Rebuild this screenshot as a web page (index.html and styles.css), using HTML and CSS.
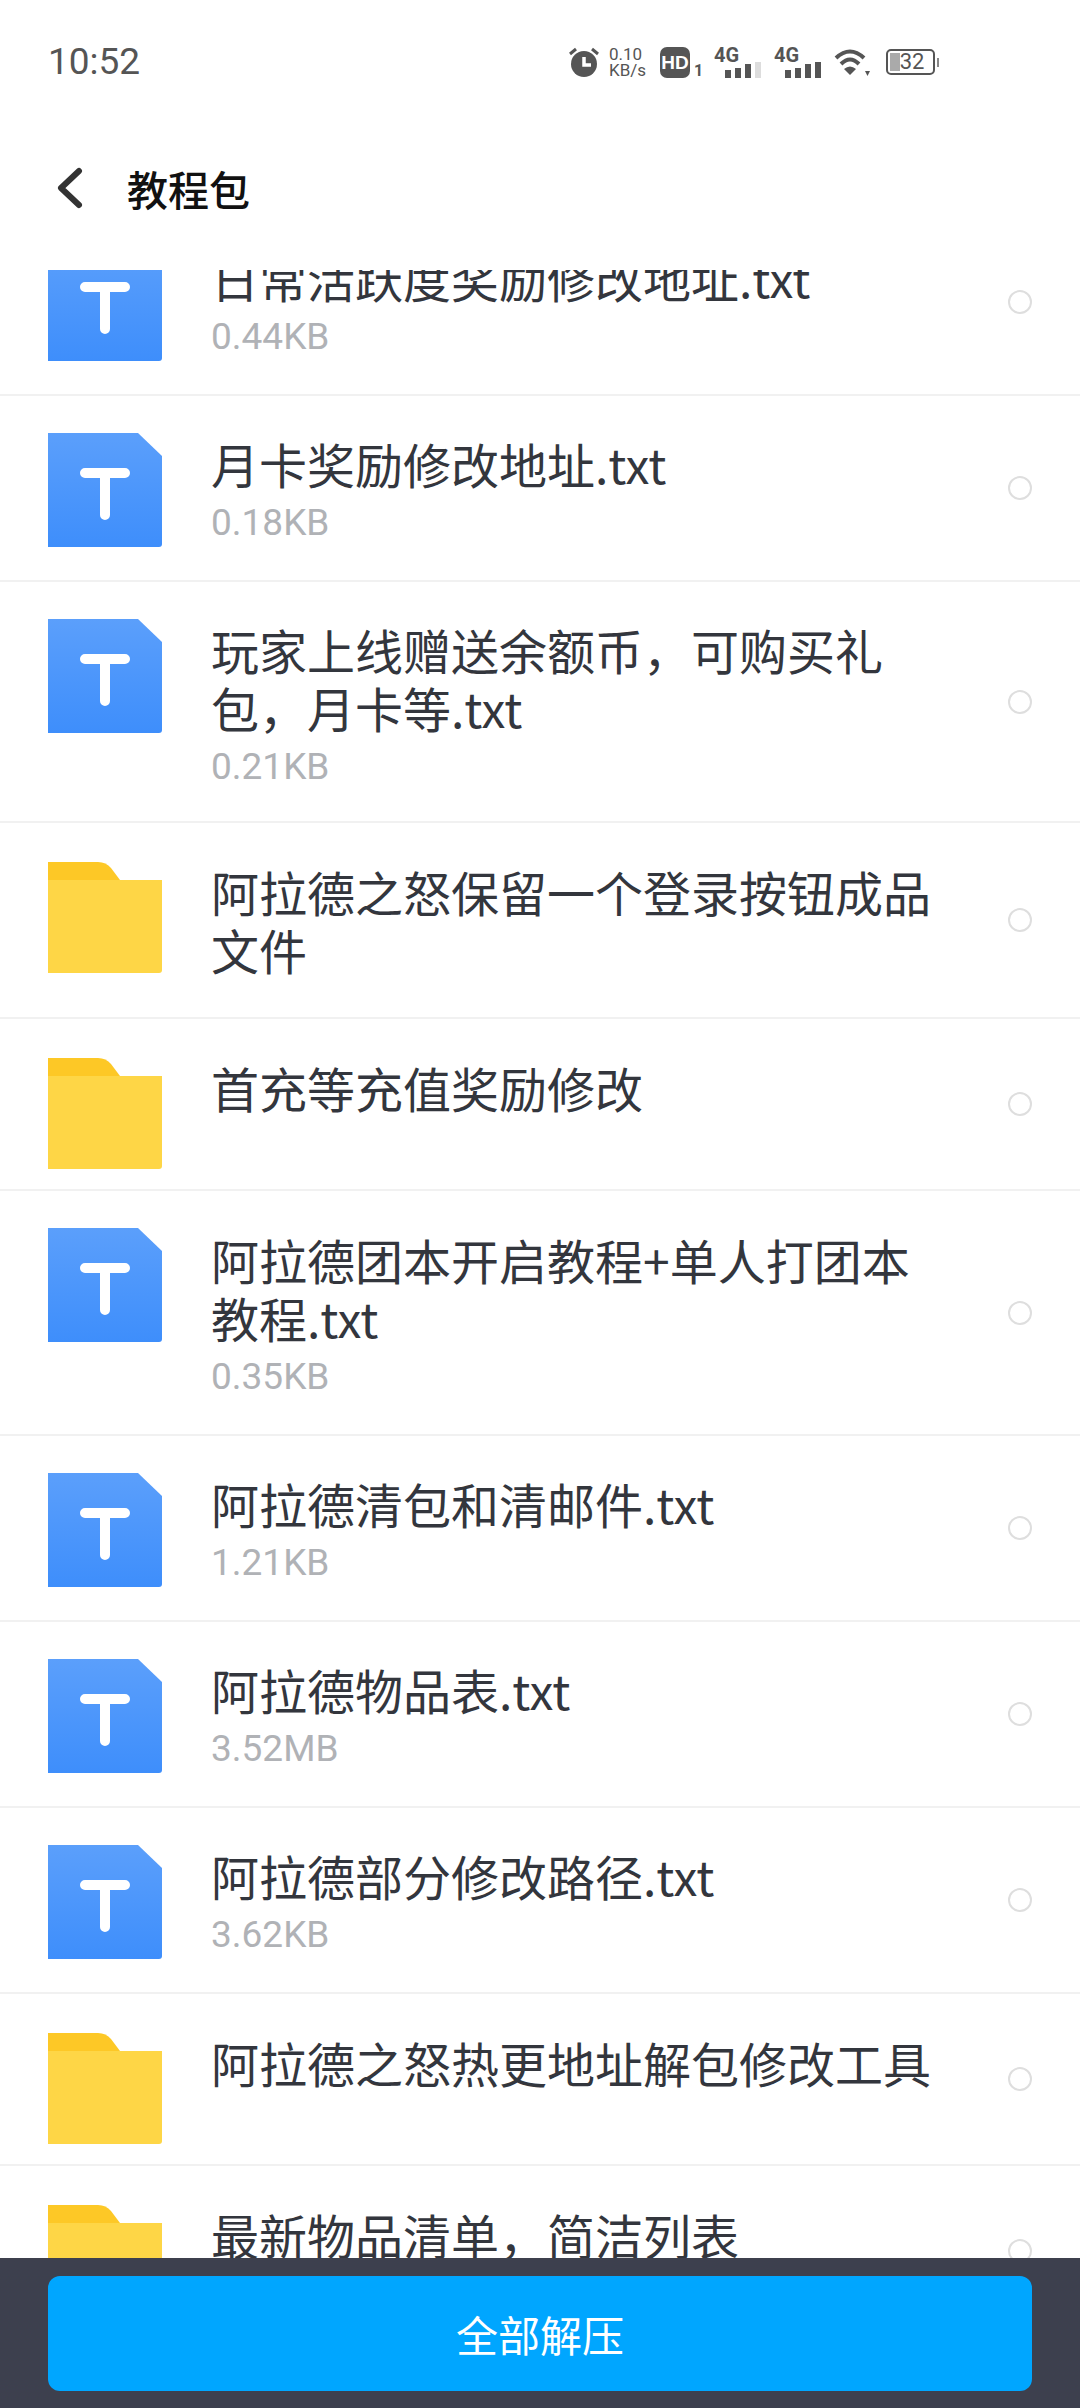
FILE: index.html
```html
<!DOCTYPE html>
<html lang="zh-CN">
<head>
    <meta charset="UTF-8">
    <meta name="viewport" content="width=device-width, initial-scale=1.0">
    <title>教程包</title>
    <link rel="stylesheet" href="styles.css">
</head>
<body>
    <svg class="defs" width="0" height="0">
        <defs>
            <linearGradient id="blue" x1="0" y1="0" x2="0" y2="1">
                <stop offset="0" stop-color="#5b9ffb"/>
                <stop offset="1" stop-color="#3e8efb"/>
            </linearGradient>
            <symbol id="file-txt" viewBox="0 0 114 114">
                <path d="M0 0H90L114 23V111Q114 114 111 114H0Z" fill="url(#blue)"/>
                <path d="M37 40H77M57 40V82" stroke="#fff" stroke-width="10" stroke-linecap="round" fill="none"/>
            </symbol>
            <symbol id="folder" viewBox="0 0 114 111">
                <path d="M0 0H50Q58 0 63 6L72 18H0Z" fill="#fdc826"/>
                <path d="M0 18H114V108Q114 111 111 111H0Z" fill="#fed646"/>
            </symbol>
        </defs>
    </svg>

    <div class="statusbar">
        <span class="time">10:52</span>
        <div class="status-icons">
            <svg class="ic-alarm" viewBox="0 0 32 32">
                <circle cx="16" cy="18" r="13" fill="#555"/>
                <path d="M16 11V19H23" stroke="#fff" stroke-width="3.500" fill="none"/>
                <path d="M2 8L8 3M30 8L24 3" stroke="#555" stroke-width="3"/>
            </svg>
            <div class="speed"><span>0.10</span><span>KB/s</span></div>
            <div class="hd"><b>HD</b></div>
            <span class="sim-no">1</span>
            <div class="signal">
                <b>4G</b>
                <svg viewBox="0 0 40 18"><path d="M3 18V10M13 18V8M23 18V4" stroke="#555" stroke-width="6"/><path d="M33 18V2" stroke="#ddd" stroke-width="6"/></svg>
            </div>
            <div class="signal">
                <b>4G</b>
                <svg viewBox="0 0 40 18"><path d="M3 18V10M13 18V8M23 18V4M33 18V2" stroke="#555" stroke-width="6"/></svg>
            </div>
            <svg class="ic-wifi" viewBox="0 0 36 28">
                <path d="M2 10Q16 -3 30 10M7 16Q16 7 25 16" stroke="#555" stroke-width="4" fill="none"/>
                <path d="M10 21Q16 16 22 21L16 27Z" fill="#555"/>
                <path d="M31 23H36L33.500 28Z" fill="#555"/>
            </svg>
            <div class="battery"><span class="battery-level"></span><span class="battery-num">32</span></div>
            <span class="battery-tip"></span>
        </div>
    </div>

    <header class="titlebar">
        <svg class="back" viewBox="0 0 26 42"><path d="M22 4L4 21L22 38" stroke="#333" stroke-width="6" stroke-linecap="round" stroke-linejoin="round" fill="none"/></svg>
        <h1>教程包</h1>
    </header>

    <div class="list">
        <div class="rows">
            <div class="row">
                <svg class="icon"><use href="#file-txt"/></svg>
                <div class="info"><p class="name">日常活跃度奖励修改地址.txt</p><p class="size">0.44KB</p></div>
                <span class="radio"></span>
            </div>
            <div class="row">
                <svg class="icon"><use href="#file-txt"/></svg>
                <div class="info"><p class="name">月卡奖励修改地址.txt</p><p class="size">0.18KB</p></div>
                <span class="radio"></span>
            </div>
            <div class="row">
                <svg class="icon"><use href="#file-txt"/></svg>
                <div class="info"><p class="name">玩家上线赠送余额币，可购买礼包，月卡等.txt</p><p class="size">0.21KB</p></div>
                <span class="radio"></span>
            </div>
            <div class="row dir">
                <svg class="icon"><use href="#folder"/></svg>
                <div class="info"><p class="name">阿拉德之怒保留一个登录按钮成品文件</p></div>
                <span class="radio"></span>
            </div>
            <div class="row dir">
                <svg class="icon"><use href="#folder"/></svg>
                <div class="info"><p class="name">首充等充值奖励修改</p></div>
                <span class="radio"></span>
            </div>
            <div class="row tall">
                <svg class="icon"><use href="#file-txt"/></svg>
                <div class="info"><p class="name">阿拉德团本开启教程+单人打团本教程.txt</p><p class="size">0.35KB</p></div>
                <span class="radio"></span>
            </div>
            <div class="row">
                <svg class="icon"><use href="#file-txt"/></svg>
                <div class="info"><p class="name">阿拉德清包和清邮件.txt</p><p class="size">1.21KB</p></div>
                <span class="radio"></span>
            </div>
            <div class="row">
                <svg class="icon"><use href="#file-txt"/></svg>
                <div class="info"><p class="name">阿拉德物品表.txt</p><p class="size">3.52MB</p></div>
                <span class="radio"></span>
            </div>
            <div class="row">
                <svg class="icon"><use href="#file-txt"/></svg>
                <div class="info"><p class="name">阿拉德部分修改路径.txt</p><p class="size">3.62KB</p></div>
                <span class="radio"></span>
            </div>
            <div class="row dir">
                <svg class="icon"><use href="#folder"/></svg>
                <div class="info"><p class="name">阿拉德之怒热更地址解包修改工具</p></div>
                <span class="radio"></span>
            </div>
            <div class="row dir">
                <svg class="icon"><use href="#folder"/></svg>
                <div class="info"><p class="name">最新物品清单，简洁列表</p></div>
                <span class="radio"></span>
            </div>
        </div>
    </div>

    <div class="bottombar">
        <button class="extract">全部解压</button>
    </div>
</body>
</html>
```

FILE: styles.css
```css
* {
    box-sizing: border-box;
}
html, body {
    margin: 0;
    padding: 0;
}
body {
    width: 1080px;
    height: 2408px;
    overflow: hidden;
    display: flex;
    flex-direction: column;
    background-color: #fff;
    font-family: "Noto Sans CJK SC", Roboto, sans-serif;
    color: #33363d;
}
.defs {
    display: block;
    height: 0;
}

.statusbar {
    height: 122px;
    padding: 39px 0 0 48px;
    display: flex;
    align-items: flex-start;
    color: #555;
    flex: none;
}
.time {
    font-family: Roboto, sans-serif;
    font-size: 37px;
    line-height: 46px;
    width: 520px;
}
.status-icons {
    display: flex;
    align-items: center;
    height: 46px;
}
.ic-alarm {
    width: 32px;
    height: 32px;
}
.speed {
    display: flex;
    flex-direction: column;
    margin-left: 9px;
    width: 36px;
    font-family: Roboto, sans-serif;
    font-size: 17px;
    line-height: 16px;
}
.hd {
    width: 30px;
    height: 31px;
    margin-left: 15px;
    background-color: #555;
    border-radius: 7px;
    color: #fff;
    font-family: "Liberation Sans", sans-serif;
    font-size: 19px;
    line-height: 31px;
    text-align: center;
}
.sim-no {
    font-family: Roboto, sans-serif;
    font-size: 16px;
    font-weight: 700;
    line-height: 16px;
    align-self: flex-end;
    margin: 0 0 6px 4px;
    width: 20px;
}
.signal {
    width: 60px;
    display: flex;
    flex-direction: column;
    font-family: Roboto, sans-serif;
    font-size: 20px;
    line-height: 17px;
}
.signal svg {
    width: 40px;
    height: 18px;
    margin: -4px 0 0 11px;
}
.ic-wifi {
    width: 36px;
    height: 28px;
}
.battery {
    position: relative;
    width: 49px;
    height: 26px;
    margin-left: 16px;
    border: 2px solid #555;
    border-radius: 5px;
    overflow: hidden;
}
.battery-level {
    position: absolute;
    left: 2px;
    top: 2px;
    bottom: 2px;
    width: 10px;
    background-color: #aaa;
}
.battery-num {
    position: absolute;
    left: 10px;
    top: 0;
    width: 28px;
    font-family: Roboto, sans-serif;
    font-size: 22px;
    line-height: 22px;
    text-align: center;
}
.battery-tip {
    width: 2px;
    height: 9px;
    margin-left: 2px;
    background-color: #888;
}

.titlebar {
    height: 148px;
    padding: 0 0 17px 57px;
    display: flex;
    align-items: center;
    flex: none;
}
.back {
    width: 26px;
    height: 42px;
}
.titlebar h1 {
    margin: 0 0 0 44px;
    font-size: 41px;
    line-height: 56px;
    font-weight: 500;
    color: #111;
}

.list {
    flex: 1;
    min-height: 0;
    overflow: hidden;
}
.rows {
    margin-top: -60px;
}
.row {
    display: flex;
    align-items: flex-start;
    min-height: 186px;
    padding: 37px 0 29px 48px;
    border-bottom: 2px solid #f1f1f1;
    position: relative;
}
.row.dir {
    min-height: 0;
    padding: 39px 0 20px 48px;
}
.row.tall {
    padding-bottom: 32px;
}
.icon {
    width: 114px;
    height: 114px;
    flex: none;
}
.dir .icon {
    height: 111px;
}
.info {
    margin: 1px 0 0 49px;
    width: 730px;
}
.tall .info {
    margin-top: 2px;
}
.dir .info {
    margin-top: 0;
    padding-bottom: 19px;
}
.name {
    margin: 0;
    font-size: 48px;
    line-height: 58px;
    word-break: break-all;
}
.size {
    margin: 6px 0 0;
    font-family: Roboto, sans-serif;
    font-size: 37px;
    line-height: 50px;
    color: #b0b2b6;
}
.radio {
    position: absolute;
    right: 48px;
    top: 50%;
    width: 24px;
    height: 24px;
    margin-top: -12px;
    border: 2px solid #dedede;
    border-radius: 50%;
}

.bottombar {
    height: 150px;
    padding: 18px 48px 0;
    background-color: #3d404e;
    flex: none;
}
.extract {
    display: block;
    width: 984px;
    height: 115px;
    border: none;
    border-radius: 12px;
    background-color: #00a6ff;
    color: #fff;
    font-family: "Noto Sans CJK SC", sans-serif;
    font-size: 42px;
}
```
